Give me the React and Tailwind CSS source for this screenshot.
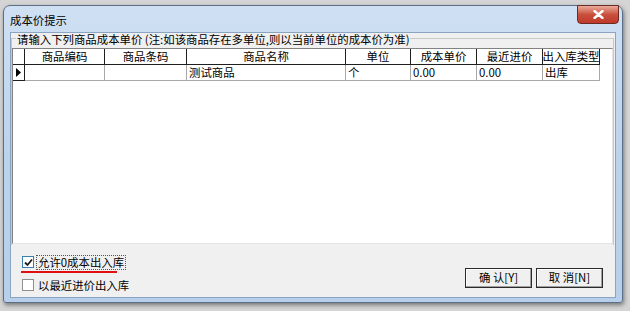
import React from "react";

const font = { fontFamily: '"Noto Sans CJK SC", "Noto Sans", sans-serif' };

const columns = [
  { label: "", w: "w-[12px]" },
  { label: "商品编码", w: "w-[80px]" },
  { label: "商品条码", w: "w-[82px]" },
  { label: "商品名称", w: "w-[159px]" },
  { label: "单位", w: "w-[65px]" },
  { label: "成本单价", w: "w-[66px]" },
  { label: "最近进价", w: "w-[66px]" },
  { label: "出入库类型", w: "w-[57px]" },
];

const row = ["", "", "", "测试商品", "个", "0.00", "0.00", "出库"];

function CheckBox({ checked, label, focused }) {
  return (
    <div className="flex items-center h-[14px]">
      <div
        className={
          "w-[12px] h-[12px] border bg-white flex items-center justify-center " +
          (checked ? "border-[#3c7fb1]" : "border-[#8f8f8f]")
        }
      >
        {checked && (
          <svg width="9" height="9" viewBox="0 0 9 9">
            <path d="M1 4.5 L3.5 7 L8 1.5" stroke="#1c1c1c" strokeWidth="1.8" fill="none" />
          </svg>
        )}
      </div>
      <span
        className={
          "ml-[2px] px-[1px] leading-[13px] " +
          (focused ? "border border-dotted border-[#555]" : "border border-transparent")
        }
      >
        {label}
      </span>
    </div>
  );
}

function Button({ children }) {
  return (
    <button className="w-[67px] h-[20px] border border-[#2b2b2b] bg-[#f0f0f0] shadow-[inset_-1px_-1px_0_#a0a0a0,inset_1px_1px_0_#ffffff] flex items-center justify-center text-[11.4px] leading-none text-black">
      {children}
    </button>
  );
}

export default function App() {
  return (
    <div className="w-[630px] h-[311px] overflow-hidden bg-[#d4d4d4] pt-[5px] pl-[3px] text-[11.4px] text-black" style={font}>
      <div className="w-[620px] h-[298px] rounded-t-[7px] rounded-b-[3px] border border-[#5c6f86] bg-gradient-to-b from-[#cfe0f3] via-[#bcd3ec] to-[#b7cfea] flex flex-col px-[6px] pb-[4px] shadow-[1px_2px_4px_rgba(0,0,0,0.45)]">
        {/* title bar */}
        <div className="h-[26px] flex items-start justify-between">
          <span className="mt-[8px] text-[11.4px] leading-[13px] text-black">成本价提示</span>
          <div className="-mt-[1px] -mr-[3px] w-[42px] h-[19px] rounded-b-[4px] border border-[#6b2a22] bg-gradient-to-b from-[#e9a99a] via-[#c8503c] to-[#c0392b] flex items-center justify-center">
            <svg width="11" height="9" viewBox="0 0 11 9">
              <path d="M1.5 1 L9.5 8 M9.5 1 L1.5 8" stroke="#ffffff" strokeWidth="2.4" strokeLinecap="round" />
            </svg>
          </div>
        </div>

        {/* client area */}
        <div className="flex-1 bg-[#f0f0f0] border border-[#8aa4c2] flex flex-col">
          <div className="relative mt-[5px] ml-[0px] mr-[1px] h-[207px] border border-[#c8c8c8] border-b-0">
            <span className="absolute -top-[6px] left-[4px] bg-[#f0f0f0] px-[1px] leading-[13px] whitespace-nowrap">
              请输入下列商品成本单价 (注:如该商品存在多单位,则以当前单位的成本价为准)
            </span>
            <div className="mt-[9px] ml-[0px] h-[196px] bg-white border-t border-l border-[#828282] border-r border-r-[#e3e3e3] border-b border-b-[#e3e3e3]">
              <div className="flex">
                {columns.map((c, i) => (
                  <div
                    key={i}
                    className={c.w + " h-[16px] border-r border-b border-[#1f1f1f] flex items-center justify-center leading-none whitespace-nowrap"}
                  >
                    {c.label}
                  </div>
                ))}
              </div>
              <div className="flex">
                {row.map((v, i) => (
                  <div
                    key={i}
                    className={
                      columns[i].w +
                      " h-[16px] border-r border-b flex items-center leading-none whitespace-nowrap " +
                      (i === 0 ? "border-[#1f1f1f] justify-center" : "border-[#a8a8a8] pl-[2px]") +
                      (i === 5 ? " bg-white" : "")
                    }
                  >
                    {i === 0 ? (
                      <svg width="5" height="9" viewBox="0 0 5 9">
                        <path d="M0 0 L5 4.5 L0 9 Z" fill="#000" />
                      </svg>
                    ) : (
                      v
                    )}
                  </div>
                ))}
              </div>
            </div>
          </div>

          {/* bottom controls */}
          <div className="flex-1 flex justify-between items-start">
            <div className="ml-[11px] mt-[10px] flex flex-col">
              <CheckBox checked focused label="允许0成本出入库" />
              <div className="mt-[2px] -ml-[1px] w-[96px] h-[2px] bg-[#e01010]" />
              <div className="mt-[5px]">
                <CheckBox label="以最近进价出入库" />
              </div>
            </div>
            <div className="mt-[23px] mr-[12px] flex gap-[4px]">
              <Button>确 认[Y]</Button>
              <Button>取 消[N]</Button>
            </div>
          </div>
        </div>
      </div>
    </div>
  );
}
